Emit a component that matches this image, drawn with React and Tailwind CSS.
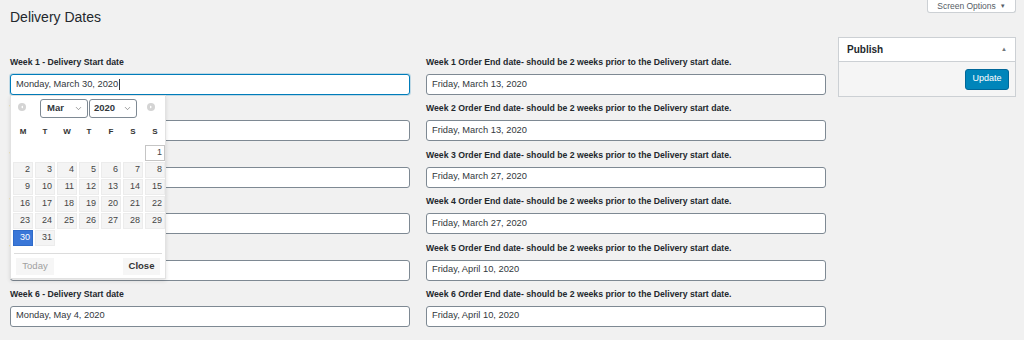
import { ChevronDown } from 'lucide-react';

const font = { fontFamily: '"Liberation Sans", Arial, sans-serif' };

const rows = [
  { start: 'Monday, March 30, 2020', end: 'Friday, March 13, 2020' },
  { start: '', end: 'Friday, March 13, 2020' },
  { start: '', end: 'Friday, March 27, 2020' },
  { start: '', end: 'Friday, March 27, 2020' },
  { start: '', end: 'Friday, April 10, 2020' },
  { start: 'Monday, May 4, 2020', end: 'Friday, April 10, 2020' },
];

function Field({ label, value, focused }) {
  return (
    <div className="flex flex-col">
      <label className="text-[8.7px] leading-[12px] font-bold text-[#23282d]">{label}</label>
      <div
        className={
          focused
            ? 'mt-[6px] h-[21px] bg-white rounded-[3px] border border-[#007cba] shadow-[0_0_0_1px_#007cba33] flex items-center px-[5px] text-[9.3px] text-[#32373c]'
            : 'mt-[6px] h-[21px] bg-white rounded-[3px] border border-[#7e8993] flex items-center px-[5px] text-[9.3px] text-[#32373c]'
        }
      >
        {value}
        {focused && <span className="w-px h-[11px] bg-[#32373c] ml-px" />}
      </div>
    </div>
  );
}

function NavDot({ dir }) {
  return (
    <span className="w-[8px] h-[8px] rounded-full bg-[#d4d4d4] flex items-center justify-center -mt-[4px]">
      <svg width="4" height="4" viewBox="0 0 4 4">
        <path d={dir === 'prev' ? 'M3 0.5 L1 2 L3 3.5Z' : 'M1 0.5 L3 2 L1 3.5Z'} fill="#fff" />
      </svg>
    </span>
  );
}

function Calendar() {
  const days = [];
  for (let i = 0; i < 6; i++) days.push(null);
  for (let d = 1; d <= 31; d++) days.push(d);

  return (
    <div className="absolute left-0 top-[21px] w-[156px] bg-white border border-[#e2e2e2] shadow-[0_2px_4px_rgba(0,0,0,0.12)] px-[2px] pt-[3px] pb-[3px] z-10">
      <div className="flex items-center h-[19px]">
        <div className="w-[18px] flex justify-center"><NavDot dir="prev" /></div>
        <div className="ml-[9px] w-[48px] h-[19px] border border-[#7e8993] rounded-[3px] flex items-center justify-between pl-[6px] pr-[4px] text-[9.5px] font-bold text-[#32373c]">
          Mar <ChevronDown size={9} strokeWidth={1.5} className="text-[#555]" />
        </div>
        <div className="ml-px w-[48px] h-[19px] border border-[#7e8993] rounded-[3px] flex items-center justify-between pl-[4px] pr-[4px] text-[9.5px] font-bold text-[#32373c]">
          2020 <ChevronDown size={9} strokeWidth={1.5} className="text-[#555]" />
        </div>
        <div className="flex-1 flex justify-end pr-[8px]"><NavDot dir="next" /></div>
      </div>
      <div className="grid grid-cols-7 gap-x-[2px] w-[152px] mx-auto mt-[6px] h-[16px] items-center text-[8px] font-bold text-[#333] text-center">
        {['M', 'T', 'W', 'T', 'F', 'S', 'S'].map((d, i) => (
          <span key={i}>{d}</span>
        ))}
      </div>
      <div className="grid grid-cols-7 gap-x-[2px] gap-y-[1.5px] w-[152px] mx-auto mt-[5px]">
        {days.map((d, i) =>
          d === null ? (
            <span key={i} className="h-[15.5px]" />
          ) : d === 1 ? (
            <span key={i} className="h-[15.5px] bg-white border border-[#c5c5c5] text-right pr-[2px] text-[9px] leading-[13.5px] text-[#454545]">{d}</span>
          ) : d === 30 ? (
            <span key={i} className="h-[15.5px] bg-[#3a77d8] border border-[#2f6bc9] text-right pr-[2px] text-[9px] leading-[13.5px] text-white">{d}</span>
          ) : (
            <span key={i} className="h-[15.5px] bg-[#f4f4f4] border border-[#ececec] text-right pr-[2px] text-[9px] leading-[13.5px] text-[#454545]">{d}</span>
          )
        )}
      </div>
      <div className="mt-[7px] mx-[1px] border-t border-[#dcdcdc] pt-[4px] flex justify-between px-[2px]">
        <span className="w-[38px] h-[17px] bg-[#f6f6f6] flex items-center justify-center text-[9.5px] text-[#a0a0a0]">Today</span>
        <span className="w-[37px] h-[17px] bg-[#f6f6f6] flex items-center justify-center text-[9.5px] font-bold text-[#333]">Close</span>
      </div>
    </div>
  );
}

export default function App() {
  return (
    <div className="w-[1024px] h-[340px] bg-[#f1f1f1] overflow-hidden relative" style={font}>
      {/* Screen options tab */}
      <div className="absolute right-[8px] top-0 w-[89px] h-[13px] bg-white border border-t-0 border-[#ccd0d4] rounded-b-[3px] flex items-center justify-center gap-[4px] text-[8.5px] text-[#555d66]">
        Screen Options <span className="text-[6px]">▼</span>
      </div>

      <div className="flex pl-[10px]">
        <div className="w-[815px]">
          <h1 className="text-[14px] leading-[18px] text-[#23282d] pt-[8px]">Delivery Dates</h1>
          <div className="grid grid-cols-[400px_400px] gap-x-[16px] mt-[30px]">
            {rows.map((r, i) => (
              <div key={i} className="contents">
                <div className={i === 0 ? 'relative mb-[7.4px]' : 'mb-[7.4px]'}>
                  <Field label={`Week ${i + 1} - Delivery Start date`} value={r.start} focused={i === 0} />
                  {i === 0 && (
                    <div className="absolute left-0 top-[18px] w-full">
                      <Calendar />
                    </div>
                  )}
                </div>
                <div className="mb-[7.4px]">
                  <Field
                    label={`Week ${i + 1} Order End date- should be 2 weeks prior to the Delivery start date.`}
                    value={r.end}
                  />
                </div>
              </div>
            ))}
          </div>
        </div>

        {/* Sidebar */}
        <div className="ml-[13px] mt-[37px] w-[178px]">
          <div className="bg-white border border-[#ccd0d4]">
            <div className="h-[24px] flex items-center justify-between px-[8px] border-b border-[#ccd0d4]">
              <span className="text-[10px] font-bold text-[#23282d]">Publish</span>
              <span className="text-[6px] text-[#72777c]">▲</span>
            </div>
            <div className="bg-[#f5f5f5] h-[34px] flex items-center justify-end pr-[6px]">
              <button className="w-[44px] h-[21px] bg-[#0085ba] border border-[#006799] rounded-[3px] text-white text-[9px]">
                Update
              </button>
            </div>
          </div>
        </div>
      </div>
    </div>
  );
}
